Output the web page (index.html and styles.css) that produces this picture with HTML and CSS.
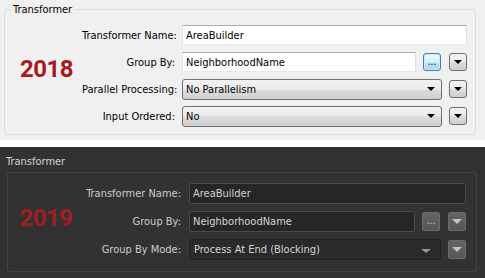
FILE: index.html
```html
<!DOCTYPE html>
<html lang="en">
<head>
  <meta charset="UTF-8" />
  <title>Transformer parameters 2018 vs 2019</title>
  <link rel="stylesheet" href="styles.css">
</head>
<body>
  <!-- 2018 dialog (classic look) -->
  <div class="panel light">
    <fieldset class="group">
      <legend>Transformer</legend>
      <div class="form">
        <div class="year">2018</div>

        <label>Transformer Name:</label>
        <div class="field"><div class="text">AreaBuilder</div></div>

        <label>Group By:</label>
        <div class="field">
          <div class="text">NeighborhoodName</div>
          <div class="btn dots">...</div>
          <div class="btn arrow"><span class="tri"></span></div>
        </div>

        <label>Parallel Processing:</label>
        <div class="field">
          <div class="combo">No Parallelism<span class="tri"></span></div>
          <div class="btn arrow"><span class="tri"></span></div>
        </div>

        <label>Input Ordered:</label>
        <div class="field">
          <div class="combo">No<span class="tri"></span></div>
          <div class="btn arrow"><span class="tri"></span></div>
        </div>
      </div>
    </fieldset>
  </div>

  <div class="sep"></div>

  <!-- 2019 dialog (dark look) -->
  <div class="panel dark">
    <div class="title">Transformer</div>
    <div class="group">
      <div class="form">
        <div class="year">2019</div>

        <label>Transformer Name:</label>
        <div class="field"><div class="text">AreaBuilder</div></div>

        <label>Group By:</label>
        <div class="field">
          <div class="text">NeighborhoodName</div>
          <div class="btn dots">...</div>
          <div class="btn arrow"><span class="tri"></span></div>
        </div>

        <label>Group By Mode:</label>
        <div class="field">
          <div class="combo">Process At End (Blocking)<span class="tri"></span></div>
          <div class="btn arrow"><span class="tri"></span></div>
        </div>
      </div>
    </div>
  </div>
</body>
</html>
```

FILE: styles.css
```css
/* General */
body {
  margin: 0;
  width: 485px;
  height: 278px;
  overflow: hidden;
  font-family: "DejaVu Sans Condensed", "Liberation Sans", Arial, sans-serif;
  font-size: 11px;
  background-color: #fff;
}

.panel {
  box-sizing: border-box;
}

.form {
  display: grid;
  align-items: center;
}

.form label {
  text-align: right;
  white-space: nowrap;
}

.field {
  display: flex;
  align-items: center;
  gap: 7px;
}

.text,
.combo {
  flex: 1;
  box-sizing: border-box;
  display: flex;
  align-items: center;
  white-space: nowrap;
  overflow: hidden;
}

.combo {
  position: relative;
}

.combo .tri {
  position: absolute;
  right: 6px;
  top: 50%;
}

.btn {
  box-sizing: border-box;
  display: flex;
  align-items: center;
  justify-content: center;
  flex: none;
}

.tri {
  width: 0;
  height: 0;
  border-left: 4px solid transparent;
  border-right: 4px solid transparent;
}

.year {
  grid-row: 1 / -1;
  grid-column: 1;
  text-align: center;
  font-family: Roboto, "Liberation Sans", sans-serif;
  font-weight: bold;
  font-size: 24px;
  letter-spacing: -0.5px;
}

/* 2018 */
.light {
  height: 140px;
  padding-top: 3px;
  background-color: #f0f0f0;
  color: #000;
}

.light .group {
  margin: 0 9px 0 4px;
  padding: 9px 8px 8px 6px;
  border: 1px solid #d5dfe5;
  border-radius: 3px;
}

.light legend {
  padding: 0 2px;
  line-height: 13px;
}

.light .form {
  grid-template-columns: 71px 100px 1fr;
  grid-template-rows: 20px 20px 20px 20px;
  row-gap: 7px;
}

.light .form label {
  padding-right: 7px;
}

.light .year {
  color: #a8181f;
  margin-bottom: 13px;
}

.light .text {
  height: 20px;
  padding-left: 3px;
  background-color: #fff;
  border: 1px solid;
  border-color: #abadb3 #dbdfe6 #e3e9ef #e2e3ea;
}

.light .combo {
  height: 21px;
  padding-left: 3px;
  border: 1px solid #707070;
  border-radius: 3px;
  background: linear-gradient(#f2f2f2 0%, #ebebeb 50%, #dddddd 50%, #cfcfcf 100%);
}

.light .combo .tri {
  margin-top: -2px;
  right: 6px;
}

.light .tri {
  border-top: 4px solid #000;
}

.light .btn {
  width: 18px;
  height: 18px;
  border: 1px solid #707070;
  border-radius: 3px;
  background: linear-gradient(#f2f2f2 0%, #ebebeb 50%, #dddddd 50%, #cfcfcf 100%);
}

.light .dots {
  border-color: #3c7fb1;
  background: linear-gradient(#eaf6fd 0%, #d9f0fc 50%, #bee6fd 50%, #a7d9f5 100%);
  box-shadow: inset 0 0 0 1px #cfe9fa;
  font-size: 10px;
  line-height: 10px;
  align-items: flex-end;
  padding-bottom: 3px;
}

.light .field .dots + .arrow {
  margin-left: 1px;
}

/* separator between the two screenshots */
.sep {
  height: 7px;
  background-color: #fff;
}

/* 2019 */
.dark {
  height: 131px;
  padding-top: 8px;
  background-color: #323232;
  color: #cdcdcd;
}

.dark .title {
  padding-left: 6px;
  line-height: 13px;
  margin-bottom: 4px;
  color: #d2d2d2;
}

.dark .group {
  margin: 0 8px 0 7px;
  padding: 10px 10px 11px 0;
  border: 1px solid #444;
  border-radius: 3px;
}

.dark .form {
  grid-template-columns: 76px 105px 1fr;
  grid-template-rows: 21px 21px 21px;
  row-gap: 7px;
}

.dark .form label {
  padding-right: 8px;
}

.dark .year {
  color: #a41c24;
  margin-bottom: 7px;
}

.dark .text {
  height: 21px;
  padding-left: 3px;
  background-color: #262626;
  border: 1px solid #4a4a4a;
  border-radius: 2px;
  color: #d4d4d4;
}

.dark .combo {
  height: 21px;
  padding-left: 4px;
  background-color: #2a2a2a;
  border: 1px solid #232323;
  border-radius: 2px;
  color: #d4d4d4;
}

.dark .combo .tri {
  margin-top: -1px;
  right: 9px;
  border-left-width: 5px;
  border-right-width: 5px;
  border-top: 4px solid #9a9a9a;
}

.dark .btn {
  width: 18px;
  height: 19px;
  border: 1px solid #6a6a6a;
  border-radius: 2px;
  background: linear-gradient(#646464, #575757);
}

.dark .arrow .tri {
  border-left-width: 5px;
  border-right-width: 5px;
  border-top: 5px solid #c4c4c4;
}

.dark .dots {
  color: #d0d0d0;
  font-size: 10px;
  line-height: 10px;
  align-items: flex-end;
  padding-bottom: 4px;
}

.dark .field .dots + .arrow {
  margin-left: 1px;
}
```
